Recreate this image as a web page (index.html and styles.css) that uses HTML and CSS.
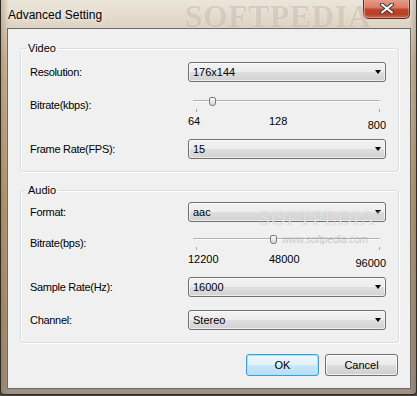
FILE: index.html
```html
<!doctype html>
<html lang="en">
  <head>
    <meta charset="UTF-8" />
    <title>Advanced Setting</title>
    <link rel="stylesheet" href="styles.css">
  </head>
  <body>
    <div class="window">
      <!-- Title bar -->
      <div class="titlebar">
        <span class="title">Advanced Setting</span>
        <span class="mark-title">SOFTPEDIA</span>
        <button class="close-btn" title="Close">
          <svg width="14" height="11" viewBox="0 0 14 11">
            <path d="M2 1.5 L12 9.5 M12 1.5 L2 9.5" stroke="#3a3a3a" stroke-width="4" stroke-linecap="round" />
            <path d="M2 1.5 L12 9.5 M12 1.5 L2 9.5" stroke="#ffffff" stroke-width="2" stroke-linecap="round" />
          </svg>
        </button>
      </div>

      <!-- Dialog body -->
      <div class="client">
        <fieldset class="group group-video">
          <legend>Video</legend>

          <div class="row">
            <span class="label">Resolution:</span>
            <div class="combo"><span>176x144</span><i class="arrow"></i></div>
          </div>

          <div class="row row-slider">
            <span class="label">Bitrate(kbps):</span>
            <div class="slider">
              <div class="track">
                <span class="thumb" style="left: 15px"></span>
              </div>
              <div class="ticks"><i></i><i></i></div>
              <div class="scale">
                <span>64</span><span>128</span><span class="max">800</span>
              </div>
            </div>
          </div>

          <div class="row">
            <span class="label">Frame Rate(FPS):</span>
            <div class="combo"><span>15</span><i class="arrow"></i></div>
          </div>
        </fieldset>

        <fieldset class="group group-audio">
          <legend>Audio</legend>

          <div class="row">
            <span class="label">Format:</span>
            <div class="combo"><span>aac</span><i class="arrow"></i></div>
          </div>

          <div class="row row-slider">
            <span class="label">Bitrate(bps):</span>
            <div class="slider">
              <div class="track">
                <span class="thumb" style="left: 76px"></span>
              </div>
              <div class="ticks"><i></i><i></i></div>
              <div class="scale">
                <span>12200</span><span>48000</span><span class="max">96000</span>
              </div>
            </div>
          </div>

          <div class="row">
            <span class="label">Sample Rate(Hz):</span>
            <div class="combo"><span>16000</span><i class="arrow"></i></div>
          </div>

          <div class="row row-last">
            <span class="label">Channel:</span>
            <div class="combo"><span>Stereo</span><i class="arrow"></i></div>
          </div>

          <!-- watermark over the format box -->
          <span class="mark-combo">SOFTPEDIA<sup>&reg;</sup></span>
          <span class="mark-url">www.softpedia.com</span>
        </fieldset>

        <div class="actions">
          <button class="btn btn-default">OK</button>
          <button class="btn">Cancel</button>
        </div>
      </div>
    </div>
  </body>
</html>
```

FILE: styles.css
```css
/* Windows 7 style dialog */
body {
  margin: 0;
  background-color: #4e463e;
  font-family: "Liberation Sans", Arial, sans-serif;
  font-size: 11px;
  color: #000;
}

.window {
  width: 417px;
  height: 395px;
  box-sizing: border-box;
  display: flex;
  flex-direction: column;
  padding: 0 5px 5px 6px;
  border: 1px solid #2e2a26;
  border-top: none;
  border-radius: 0 0 4px 4px;
  background:
    linear-gradient(90deg, rgba(120, 90, 50, 0.3) 0, rgba(0, 0, 0, 0) 8px, rgba(0, 0, 0, 0) 408px, rgba(90, 80, 70, 0.35) 417px),
    linear-gradient(180deg, #ece5da 0, #e2d8c9 20px, #cdb99b 60px, #b99c74 200px, #a89178 340px, #9e9286 395px);
}

/* Title bar */
.titlebar {
  position: relative;
  height: 28px;
  display: flex;
  justify-content: space-between;
  align-items: flex-start;
  flex-shrink: 0;
}

.title {
  margin: 8px 0 0 1px;
  font-size: 12px;
  line-height: 14px;
  color: #000;
  text-shadow: 0 0 6px rgba(255, 255, 255, 0.9);
}

.mark-title {
  position: absolute;
  left: 178px;
  top: 1px;
  font-family: "Liberation Serif", serif;
  font-weight: bold;
  font-size: 31px;
  line-height: 31px;
  letter-spacing: 1px;
  color: rgba(150, 130, 110, 0.3);
  text-shadow: 0 0 2px rgba(255, 255, 255, 0.4);
}

.close-btn {
  width: 47px;
  height: 20px;
  margin: -1px 1px 0 0;
  padding: 0;
  display: flex;
  align-items: center;
  justify-content: center;
  border: 1px solid #5b2a22;
  border-top: none;
  border-radius: 0 0 5px 5px;
  background: linear-gradient(180deg, #e6a08f 0%, #d77a64 45%, #c4442a 55%, #b63e28 80%, #cc6c52 100%);
  box-shadow: inset 0 0 0 1px rgba(255, 220, 210, 0.35);
}

.client {
  flex: 1;
  padding: 13px 11px 0 12px;
  background-color: #f0f0f0;
  border: 1px solid #6a6a6a;
}

/* Group boxes */
.group {
  position: relative;
  margin: 0;
  min-width: 0;
  padding: 0 12px 12px 9px;
  border: 1px solid #d5dfe5;
  border-radius: 3px;
  box-shadow: 1px 1px 0 #fff, inset 1px 1px 0 #fff;
}

.group legend {
  margin-left: -4px;
  padding: 0 2px;
  line-height: 13px;
}

.group-video {
  --track: 18px;
  --first: 7px;
}

.group-audio {
  --track: 16px;
  --first: 5px;
  margin-top: 12px;
}

.row {
  display: grid;
  grid-template-columns: 158px 1fr;
  align-items: center;
}

.row:first-of-type {
  margin-top: var(--first);
}

.row-last {
  margin-top: 13px;
}

.label {
  line-height: 13px;
  letter-spacing: -0.3px;
}

.row-slider {
  align-items: start;
}

.row-slider .label {
  margin-top: calc(var(--track) - 1px);
}

/* Combo boxes */
.combo {
  height: 20px;
  box-sizing: border-box;
  display: flex;
  align-items: center;
  justify-content: space-between;
  padding: 0 4px 0 4px;
  border: 1px solid #707070;
  border-radius: 3px;
  background: linear-gradient(180deg, #f3f3f3 0%, #ececec 50%, #dfdfdf 50%, #d2d2d2 100%);
  box-shadow: inset 0 0 0 1px rgba(255, 255, 255, 0.6);
  line-height: 13px;
}

.arrow {
  width: 0;
  height: 0;
  border-top: 4px solid #000;
  border-left: 3.5px solid transparent;
  border-right: 3.5px solid transparent;
}

/* Track bars */
.slider {
  height: 57px;
  padding-top: var(--track);
  box-sizing: border-box;
}

.group-audio .slider {
  height: 55px;
}

.track {
  position: relative;
  height: 0;
  margin: 0 6px 0 5px;
  border-top: 1px solid #b0b0b0;
  border-bottom: 1px solid #fdfdfd;
  border-left: 1px solid #c8c8c8;
  border-right: 1px solid #e0e0e0;
}

.thumb {
  position: absolute;
  top: -4px;
  width: 7px;
  height: 9px;
  box-sizing: border-box;
  border: 1px solid #7a7a7a;
  border-radius: 2px 2px 3px 3px;
  background: linear-gradient(180deg, #fafafa, #d6d6d6);
}

.ticks {
  display: flex;
  justify-content: space-between;
  height: 3px;
  margin: 7px 6px 0 8px;
}

.ticks i {
  width: 1px;
  background-color: #a8a8a8;
}

.scale {
  display: grid;
  grid-template-columns: 81px 1fr auto;
  margin-top: 3px;
  line-height: 13px;
}

.scale .max {
  margin-top: 4px;
}

/* Watermark over the audio format box */
.mark-combo {
  position: absolute;
  left: 238px;
  top: 7px;
  font-family: "Liberation Serif", serif;
  font-size: 20px;
  line-height: 20px;
  letter-spacing: 1px;
  color: rgba(255, 255, 255, 0.6);
  text-shadow: 0 0 1px rgba(150, 150, 150, 0.6);
}

.mark-combo sup {
  font-size: 9px;
}

.mark-url {
  position: absolute;
  left: 261px;
  top: 37px;
  font-size: 10px;
  line-height: 12px;
  font-style: italic;
  color: rgba(170, 170, 170, 0.6);
}

/* Dialog buttons */
.actions {
  display: flex;
  justify-content: flex-end;
  gap: 6px;
  margin-top: 11px;
  padding-right: 1px;
}

.btn {
  width: 73px;
  height: 22px;
  padding: 0;
  font-family: inherit;
  font-size: 11px;
  color: #000;
  border: 1px solid #707070;
  border-radius: 3px;
  background: linear-gradient(180deg, #f2f2f2 0%, #ebebeb 50%, #dddddd 50%, #cfcfcf 100%);
  box-shadow: inset 0 0 0 1px rgba(255, 255, 255, 0.7);
}

.btn-default {
  border-color: #3c9ed6;
  background: linear-gradient(180deg, #eef7fd 0%, #e1f1fb 50%, #cbe7f8 50%, #b9ddf3 100%);
  box-shadow: inset 0 0 0 1px #a8e4fb;
}
```
